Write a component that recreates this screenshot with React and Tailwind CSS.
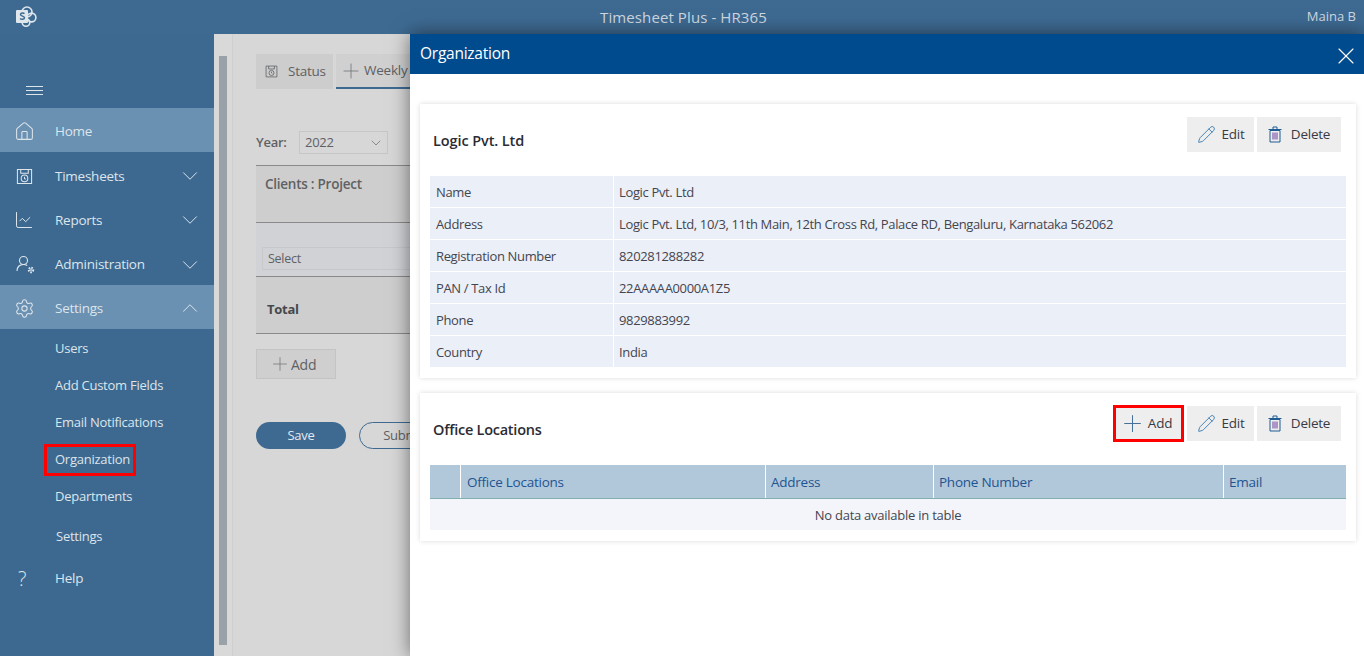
import { Pencil, Plus, X, House, ChartLine, Settings, ChevronDown, ChevronUp } from "lucide-react";

// small custom icons that the packages don't have in the right shape
function SheetIcon({ className }) {
  return (
    <svg viewBox="0 0 18 18" fill="none" stroke="currentColor" strokeWidth="1.1" className={className}>
      <path d="M1.500 1.500h15v15h-15z" />
      <path d="M5 1.500v4h8v-4" />
      <circle cx="9" cy="11" r="3.500" />
      <path d="M9 9.200V11l1.200 1" />
    </svg>
  );
}

function AdminIcon({ className }) {
  return (
    <svg viewBox="0 0 20 20" fill="none" stroke="currentColor" strokeWidth="1.1" className={className}>
      <circle cx="7.500" cy="5.500" r="4" />
      <path d="M1 16c0-4 2.500-6.500 6.500-6.500 1.500 0 2.700.3 3.700 1" />
      <circle cx="15" cy="15" r="2.200" strokeWidth="2" strokeDasharray="1.4 1" />
      <circle cx="15" cy="15" r="1" strokeWidth="0.8" />
    </svg>
  );
}

function Logo() {
  return (
    <svg viewBox="0 0 22 22" className="w-[22px] h-[22px]">
      <circle cx="12" cy="6" r="5" fill="none" stroke="#dfe6ec" strokeWidth="1.600" />
      <circle cx="16.500" cy="11.500" r="4.400" fill="none" stroke="#dfe6ec" strokeWidth="1.600" />
      <circle cx="11" cy="16.500" r="3.800" fill="none" stroke="#dfe6ec" strokeWidth="1.600" />
      <rect x="1" y="4" width="12" height="13" rx="1" fill="#dfe6ec" />
      <path d="M9.500 7.600c-1-.8-4-.9-4 .9 0 2 4 1.300 4 3.300 0 1.900-3.200 1.700-4.500.8" fill="none" stroke="#3e6a92" strokeWidth="1.500" />
    </svg>
  );
}

function TrashIcon() {
  return (
    <svg viewBox="0 0 14 17" fill="none" className="w-[14px] h-[17px]">
      <path d="M2 4.500h10V16H2zM0.500 3.500h13M5 3.500V1h4v2.500" stroke="#1f5c94" strokeWidth="1" />
      <path d="M5 6.500v7M7 6.500v7M9 6.500v7" stroke="#6d3fa0" strokeWidth="1" />
    </svg>
  );
}

function NavRow({ icon, label, active, chevron, className }) {
  return (
    <div className={`flex items-center pl-[16px] pr-[7px] ${active ? "bg-[#6a90b2]" : ""} ${className}`}>
      <div className="w-[39px] flex text-[#dce5ec]">{icon}</div>
      <span className="flex-1 text-[13.5px]">{label}</span>
      {chevron === "down" && <ChevronDown size={34} strokeWidth={0.9} className="text-[#dce5ec] h-[26px]" />}
      {chevron === "up" && <ChevronUp size={34} strokeWidth={0.9} className="text-[#dce5ec] h-[26px]" />}
    </div>
  );
}

function ActionButton({ icon, label, className }) {
  return (
    <button className={`h-[35px] bg-[#eeeeee] flex items-center justify-center text-[#3a3a44] text-[13.5px] ${className}`}>
      {icon}
      {label}
    </button>
  );
}

const details = [
  ["Name", "Logic Pvt. Ltd"],
  ["Address", "Logic Pvt. Ltd, 10/3, 11th Main, 12th Cross Rd, Palace RD, Bengaluru, Karnataka 562062"],
  ["Registration Number", "820281288282"],
  ["PAN / Tax Id", "22AAAAA0000A1Z5"],
  ["Phone", "9829883992"],
  ["Country", "India"],
];

const pencil = <Pencil size={19} strokeWidth={1.1} className="text-[#2f75ad]" />;

export default function App() {
  return (
    <div className="h-screen flex flex-col overflow-hidden text-[13px] font-['Open_Sans','Noto_Sans',sans-serif] tracking-[-0.25px]">
      {/* Top bar */}
      <div className="h-[34px] shrink-0 bg-[#3e6a92] grid grid-cols-[1fr_auto_1fr] items-center pl-[15px] pr-[8px] text-[#cfd8e0]">
        <Logo />
        <span className="text-[15px] tracking-[0.1px] -ml-[4px]">Timesheet Plus - HR365</span>
        <span className="text-[13px] tracking-normal text-right">Maina B</span>
      </div>

      <div className="flex-1 flex relative min-h-0">
        {/* Sidebar */}
        <div className="w-[214px] shrink-0 bg-[#3d6990] text-[#dce5ec] pt-[52px]">
          <div className="h-[22px] pl-[26px] flex flex-col gap-[3px]">
            <div className="w-[17px] h-px bg-[#dce5ec]" />
            <div className="w-[17px] h-px bg-[#dce5ec]" />
            <div className="w-[17px] h-px bg-[#dce5ec]" />
          </div>
          <NavRow icon={<House size={21} strokeWidth={1.2} className="-ml-[2px]" />} label="Home" active className="h-[44px] pt-[2px]" />
          <NavRow icon={<SheetIcon className="w-[17px] h-[17px]" />} label="Timesheets" chevron="down" className="h-[44px] pt-[4px]" />
          <NavRow icon={<ChartLine size={20} strokeWidth={1.2} className="-ml-[2px]" />} label="Reports" chevron="down" className="h-[44px] pt-[4px]" />
          <NavRow icon={<AdminIcon className="w-[20px] h-[20px]" />} label="Administration" chevron="down" className="h-[45px] pt-[4px]" />
          <NavRow icon={<Settings size={21} strokeWidth={1.2} className="-ml-[2px]" />} label="Settings" active chevron="up" className="h-[44px] pt-[2px]" />
          <div className="pl-[55px] pt-px">
            <div className="h-[37px] flex items-center">Users</div>
            <div className="h-[37px] flex items-center">Add Custom Fields</div>
            <div className="h-[37px] flex items-center">Email Notifications</div>
            <div className="h-[37px] flex items-center">
              <span className="h-[32px] -ml-[11px] pl-[8px] pr-[3px] flex items-center border-[3px] border-[#ff0000]">Organization</span>
            </div>
            <div className="h-[37px] flex items-center">Departments</div>
            <div className="h-[44px] flex items-center pl-px">Settings</div>
          </div>
          <div className="h-[39px] flex items-center pl-[18px]">
            <span className="w-[37px] text-[20px] font-light leading-none">?</span>
            <span className="text-[13.5px]">Help</span>
          </div>
        </div>

        {/* Page behind the panel */}
        <div className="w-[19px] shrink-0 bg-[#d9d9d9] pl-[5px] pt-[22px] pb-[11px] border-r border-[#cfcfcf]">
          <div className="w-[8px] h-full bg-[#9aa2a9]" />
        </div>
        <div className="flex-1 bg-[#d7d7d7] pl-[23px] pt-[20px] text-[#5f6164] min-w-0">
          <div className="flex gap-[3px]">
            <div className="w-[77px] h-[35px] bg-[#cdcdcd] flex items-center pl-[9px] gap-[10px]">
              <SheetIcon className="w-[13px] h-[13px]" />
              <span className="text-[13.5px]">Status</span>
            </div>
            <div className="w-[120px] h-[35px] bg-[#d0d0d0] border-b-2 border-[#3e6a92] flex items-center pl-[3px] gap-[2px]">
              <Plus size={24} strokeWidth={0.9} className="text-[#777a7d] shrink-0 -mr-[1px]" />
              <span className="text-[13.5px]">Weekly</span>
            </div>
          </div>
          <div className="flex items-center mt-[42px]">
            <span className="w-[43px] font-semibold">Year:</span>
            <div className="w-[89px] h-[23px] border border-[#c6c6c6] flex items-center justify-between pl-[5px] pr-[3px]">
              2022
              <ChevronDown size={16} strokeWidth={1} />
            </div>
          </div>
          <div className="w-[700px] mt-[11px] border-t border-[#8a8a8a]">
            <div className="h-[57px] bg-[#cecece] pl-[9px] pt-[8px] text-[13.5px] font-semibold border-b border-[#8a8a8a]">Clients : Project</div>
            <div className="h-[54px] bg-[#d0d2d6] pl-[6px] pt-[24px] border-b border-[#8a8a8a]">
              <div className="h-[23px] border border-[#c6c8cc] flex items-center pl-[5px] pt-[2px] text-[12.5px]">Select</div>
            </div>
            <div className="h-[57px] bg-[#cecece] pl-[11px] pt-[10px] flex items-center font-bold text-[#46484c] border-b border-[#8a8a8a]">Total</div>
          </div>
          <div className="w-[80px] h-[30px] mt-[15px] pl-[12px] bg-[#cfcfcf] border border-[#c4c4c4] flex items-center text-[14px]">
            <Plus size={22} strokeWidth={0.9} className="text-[#777a7d]" />
            Add
          </div>
          <div className="flex gap-[13px] mt-[43px]">
            <div className="w-[90px] h-[27px] rounded-full bg-[#3e6a92] text-[#e3e9ee] flex items-center justify-center">Save</div>
            <div className="w-[90px] h-[27px] rounded-full border border-[#3e6a92] flex items-center justify-center">Submit</div>
          </div>
        </div>

        {/* Organization panel */}
        <div className="absolute top-0 bottom-0 left-[410px] right-0 bg-white shadow-[0_0_18px_rgba(0,0,0,0.5)] flex flex-col">
          <div className="h-[40px] shrink-0 bg-[#004b8d] text-white flex items-center justify-between pl-[10px] pr-[4px]">
            <span className="text-[15.5px] -mt-[1px]">Organization</span>
            <X size={28} strokeWidth={1} className="mt-[4px]" />
          </div>
          <div className="pl-[10px] pr-[8px] pt-[30px] flex flex-col gap-[15px]">
            <div className="h-[274px] shadow-[0_0_5px_rgba(0,0,0,0.15)] px-[10px] pt-[13px]">
              <div className="flex justify-between pr-[5px]">
                <span className="pl-[3px] pt-[13px] text-[14.5px] font-semibold text-[#2b2b33] tracking-[-0.1px]">Logic Pvt. Ltd</span>
                <div className="flex gap-[3px]">
                  <ActionButton icon={pencil} label="Edit" className="w-[67px] gap-[6px]" />
                  <ActionButton icon={<TrashIcon />} label="Delete" className="w-[84px] gap-[9px]" />
                </div>
              </div>
              <div className="mt-[24px] flex flex-col gap-px tracking-[-0.35px]">
                {details.map(([label, value]) => (
                  <div key={label} className="h-[31px] flex gap-px text-[#45454f]">
                    <div className="w-[183px] bg-[#ebeff7] flex items-center pl-[6px] pt-[2px]">{label}</div>
                    <div className="flex-1 bg-[#ebeff7] flex items-center pl-[5px] pt-[2px]">{value}</div>
                  </div>
                ))}
              </div>
            </div>

            <div className="h-[148px] shadow-[0_0_5px_rgba(0,0,0,0.15)] px-[10px] pt-[12px]">
              <div className="flex justify-between pr-[5px]">
                <span className="pl-[3px] pt-[14px] text-[14.5px] font-semibold text-[#2b2b33] tracking-[-0.25px]">Office Locations</span>
                <div className="flex gap-[3px] items-center h-[37px]">
                  <button className="w-[71px] h-[37px] bg-[#eeeeee] border-[3px] border-[#ff0000] flex items-center justify-center gap-[2px] text-[#3a3a44] text-[13.5px]">
                    <Plus size={27} strokeWidth={0.9} className="text-[#45709a] -ml-[6px]" />
                    Add
                  </button>
                  <ActionButton icon={pencil} label="Edit" className="w-[67px] gap-[6px]" />
                  <ActionButton icon={<TrashIcon />} label="Delete" className="w-[84px] gap-[9px]" />
                </div>
              </div>
              <div className="mt-[23px]">
                <div className="h-[34px] flex gap-px bg-white border-b border-[#7fb0ad] text-[#1f5590] text-[13.5px]">
                  <div className="w-[30px] bg-[#b1c7da]" />
                  <div className="w-[304px] bg-[#b1c7da] flex items-center pl-[6px] pt-[2px]">Office Locations</div>
                  <div className="w-[167px] bg-[#b1c7da] flex items-center pl-[5px] pt-[2px]">Address</div>
                  <div className="w-[289px] bg-[#b1c7da] flex items-center pl-[5px] pt-[2px]">Phone Number</div>
                  <div className="flex-1 bg-[#b1c7da] flex items-center pl-[5px] pt-[2px]">Email</div>
                </div>
                <div className="h-[31px] bg-[#f3f5fa] flex items-center justify-center pt-[2px] text-[#45454f]">No data available in table</div>
              </div>
            </div>
          </div>
        </div>
      </div>
    </div>
  );
}
